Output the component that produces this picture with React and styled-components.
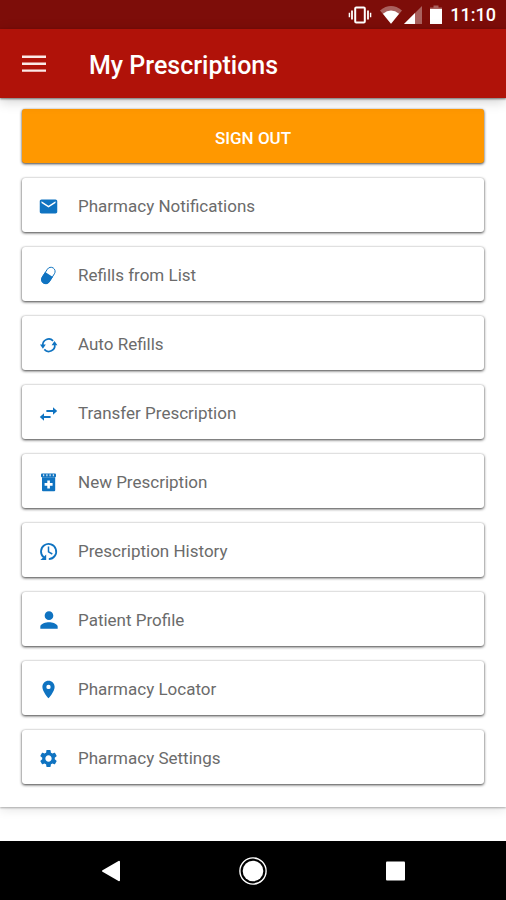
import styled, { createGlobalStyle } from "styled-components";
import { MdEmail, MdLocationOn, MdPerson, MdSettings } from "react-icons/md";

const GlobalStyle = createGlobalStyle`
  * {
    box-sizing: border-box;
  }
  body {
    margin: 0;
    background: #fff;
    font-family: Roboto, "Liberation Sans", sans-serif;
  }
`

function VibrateIcon() {
  return (
    <svg width="24" height="20" viewBox="0 0 24 20" fill="none" stroke="#fff">
      <rect x="7.2" y="2.5" width="9.6" height="15" rx="1" strokeWidth="2" />
      <path d="M4 5.5v9M20 5.5v9" strokeWidth="1.8" />
      <path d="M1.4 7.8v4.4M22.6 7.8v4.4" strokeWidth="1.4" />
    </svg>
  )
}

function WifiIcon() {
  return (
    <svg width="22" height="20" viewBox="0 0 22 20" fill="#fff">
      <path d="M0 5.4Q11-3.5 22 5.4L11 18.8z" opacity="0.35" />
      <path d="M2.9 8.7Q11 2.2 19.1 8.7L11 18.8z" />
    </svg>
  )
}

function SignalIcon() {
  return (
    <svg width="18" height="20" viewBox="0 0 18 20" fill="#fff">
      <path d="M18 1v18H0z" opacity="0.35" />
      <path d="M11 8v11H0z" />
    </svg>
  )
}

function BatteryIcon() {
  return (
    <svg width="12" height="20" viewBox="0 0 12 20" fill="#fff">
      <path d="M3.5 0.5h5v2H12v3H0v-3h3.5z" opacity="0.35" />
      <path d="M0 4h12v15H0z" />
    </svg>
  )
}

function MenuIcon() {
  return (
    <svg width="24" height="18" viewBox="0 0 24 18" fill="#fbe9e7">
      <path d="M0 0.6h24V3H0zM0 7.5h24v2.4H0zM0 14.4h24v2.4H0z" />
    </svg>
  )
}

function PillIcon() {
  return (
    <svg width="25" height="25" viewBox="0 0 25 25">
      <g transform="rotate(33 12.3 12.5)">
        <rect x="8.1" y="3.5" width="8.4" height="18" rx="4.2" fill="#fff" stroke="#0f73c1" strokeWidth="0.9" />
        <path d="M7.7 11.2h9.2v6a4.6 4.6 0 0 1-9.2 0z" fill="#0f73c1" />
      </g>
    </svg>
  )
}

function RefreshIcon() {
  return (
    <svg width="25" height="25" viewBox="0 0 25 25">
      <path d="M17.1 8.9A6 6 0 0 0 6.8 13.4M8.3 17.4A6 6 0 0 0 18.7 12.4" fill="none" stroke="#0f73c1" strokeWidth="1.7" />
      <path d="M4 12.6h5.8L6.9 16.8zM15.6 13.2h5.8L18.5 9z" fill="#0f73c1" />
    </svg>
  )
}

function TransferIcon() {
  return (
    <svg width="25" height="25" viewBox="0 0 25 25" fill="#0f73c1">
      <path d="M10.4 9h6.6V6.3l4.2 3.7-4.2 3.7V11h-6.6z" />
      <path d="M14.6 15H8v-2.7L3.8 16 8 19.7V17h6.6z" />
    </svg>
  )
}

function BottleIcon() {
  return (
    <svg width="25" height="25" viewBox="0 0 25 25" fill="#0f73c1">
      <rect x="5" y="3.6" width="15" height="3.6" rx="1" />
      <path d="M7.6 4.3v2M10.9 4.3v2M14.1 4.3v2M17.4 4.3v2" stroke="#fff" strokeWidth="1.3" opacity="0.8" />
      <path d="M6 7.2h13.2v13a1 1 0 0 1-1 1H7a1 1 0 0 1-1-1z" />
      <path d="M11.3 10.4h2.6v2.7h2.7v2.6h-2.7v2.7h-2.6v-2.7H8.6v-2.6h2.7z" fill="#fff" />
    </svg>
  )
}

function HistoryIcon() {
  return (
    <svg width="25" height="25" viewBox="0 0 25 25" fill="none" stroke="#0f73c1">
      <path d="M7.8 18.4A7.6 7.6 0 1 1 12.8 20.1" strokeWidth="1.8" />
      <path d="M12.5 7.6v5.2l3.8 2.2" strokeWidth="1.5" />
      <path d="M4.4 21h5.8v-5.6z" fill="#0f73c1" stroke="none" />
    </svg>
  )
}

const menuItems = [
  { label: 'Pharmacy Notifications', icon: <MdEmail size={21} /> },
  { label: 'Refills from List', icon: <PillIcon /> },
  { label: 'Auto Refills', icon: <RefreshIcon /> },
  { label: 'Transfer Prescription', icon: <TransferIcon /> },
  { label: 'New Prescription', icon: <BottleIcon /> },
  { label: 'Prescription History', icon: <HistoryIcon /> },
  { label: 'Patient Profile', icon: <MdPerson size={26} /> },
  { label: 'Pharmacy Locator', icon: <MdLocationOn size={21} /> },
  { label: 'Pharmacy Settings', icon: <MdSettings size={21} /> }
]

export default function App() {
  return (
    <Screen>
      <GlobalStyle />
      <StatusBar>
        <VibrateIcon />
        <StatusGroup>
          <WifiIcon />
          <SignalIcon />
        </StatusGroup>
        <BatteryIcon />
        <Clock>11:10</Clock>
      </StatusBar>
      <Header>
        <IconButton type="button" aria-label="Open menu">
          <MenuIcon />
        </IconButton>
        <Title>My Prescriptions</Title>
      </Header>
      <Main>
        <Panel>
          <SignOutButton type="button">SIGN OUT</SignOutButton>
          {menuItems.map((item) => (
            <MenuCard key={item.label} type="button">
              <CardIcon>{item.icon}</CardIcon>
              {item.label}
            </MenuCard>
          ))}
        </Panel>
      </Main>
      <NavBar>
        <IconButton type="button" aria-label="Back">
          <svg width="28" height="28" viewBox="0 0 28 28">
            <path d="M6 14L22 4.8v18.4z" fill="#fff" stroke="#fff" strokeWidth="2" strokeLinejoin="round" />
          </svg>
        </IconButton>
        <IconButton type="button" aria-label="Home">
          <svg width="28" height="28" viewBox="0 0 28 28">
            <circle cx="14" cy="14" r="13.1" fill="none" stroke="#fff" strokeWidth="1.4" />
            <circle cx="14" cy="14" r="10.3" fill="#fff" />
          </svg>
        </IconButton>
        <IconButton type="button" aria-label="Recent apps">
          <svg width="28" height="28" viewBox="0 0 28 28">
            <rect x="5" y="4.5" width="19" height="19" rx="1" fill="#fff" />
          </svg>
        </IconButton>
      </NavBar>
    </Screen>
  )
}

const Screen = styled.div`
  display: flex;
  flex-direction: column;
  min-height: 100vh;
`

const StatusBar = styled.div`
  display: flex;
  align-items: center;
  justify-content: flex-end;
  gap: 8px;
  height: 29px;
  padding-right: 10px;
  background: #7d0d09;
  color: #fff;

  svg {
    display: block;
  }
`

const StatusGroup = styled.div`
  display: flex;
  gap: 2px;
`

const Clock = styled.span`
  font-size: 18px;
  font-weight: 500;
  line-height: 28px;
`

const Header = styled.header`
  display: flex;
  align-items: center;
  gap: 43px;
  height: 69px;
  padding: 0 22px;
  background: #b01209;
  color: #fff;
  box-shadow: 0 1px 2px rgba(0, 0, 0, 0.5), 0 3px 12px rgba(0, 0, 0, 0.2);
  z-index: 1;
`

const Title = styled.h1`
  margin: 0;
  padding-top: 5px;
  font-size: 25px;
  font-weight: 500;
  line-height: 32px;
`

const IconButton = styled.button`
  display: block;
  padding: 0;
  border: 0;
  background: none;
  cursor: pointer;

  svg {
    display: block;
  }
`

const Main = styled.main`
  flex: 1;
`

const Panel = styled.div`
  display: flex;
  flex-direction: column;
  gap: 15px;
  padding: 11px 22px 23px;
  background: #fff;
  box-shadow: 0 1px 2px rgba(0, 0, 0, 0.3), 0 3px 10px rgba(0, 0, 0, 0.1);
`

const CardButton = styled.button`
  height: 54px;
  border: 0;
  border-radius: 3px;
  font-family: inherit;
  font-size: 17px;
  cursor: pointer;
  box-shadow: 0 0 1px rgba(0, 0, 0, 0.2), 0 1px 3px rgba(0, 0, 0, 0.75);
`

const SignOutButton = styled(CardButton)`
  padding: 4px 0 0;
  background: #ff9800;
  color: #fff;
  font-weight: 500;
`

const MenuCard = styled(CardButton)`
  display: flex;
  align-items: center;
  gap: 17px;
  padding: 2px 14px 0;
  background: #fff;
  color: #6b6b6b;
  text-align: left;
`

const CardIcon = styled.span`
  display: grid;
  place-items: center;
  width: 25px;
  color: #0f73c1;
`

const NavBar = styled.nav`
  display: flex;
  align-items: center;
  justify-content: space-between;
  height: 59px;
  padding: 0 97px;
  background: #000;
`
